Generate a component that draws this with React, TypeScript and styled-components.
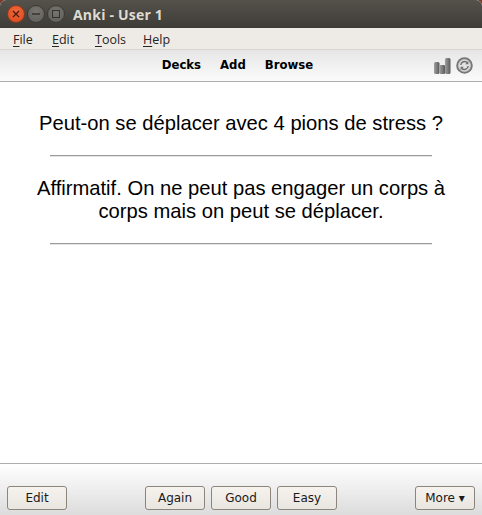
import React from "react";
import styled, { createGlobalStyle } from "styled-components";

const GlobalStyle = createGlobalStyle`
  html, body {
    margin: 0;
    padding: 0;
    background: #7a3a2c;
  }
`;

const Window = styled.div`
  width: 482px;
  height: 515px;
  display: flex;
  flex-direction: column;
  background: #fff;
  border-radius: 6px 6px 0 0;
  overflow: hidden;
  font-family: "Open Sans", "DejaVu Sans", sans-serif;
`;

const TitleBar = styled.div`
  height: 28px;
  flex: none;
  display: flex;
  align-items: center;
  padding-left: 8px;
  background: linear-gradient(#55524c, #3e3c37);
  box-sizing: border-box;
`;

const WindowButtons = styled.div`
  display: flex;
  gap: 4px;
  margin-right: 9px;
`;

const WindowButton = styled.div<{ $close?: boolean }>`
  width: 16px;
  height: 16px;
  border-radius: 50%;
  display: flex;
  align-items: center;
  justify-content: center;
  background: ${(p) =>
    p.$close
      ? "radial-gradient(circle at 50% 35%, #f0693c, #d9471d)"
      : "radial-gradient(circle at 50% 35%, #77756f, #5e5c56)"};
  border: 1px solid ${(p) => (p.$close ? "#8a3a20" : "#3c3a36")};
  margin: -1px -1px;
`;

const Title = styled.div`
  color: #dfdbd2;
  font-family: "Open Sans", sans-serif;
  font-weight: 700;
  font-size: 14px;
  letter-spacing: 0.2px;
`;

const MenuBar = styled.div`
  height: 19px;
  flex: none;
  display: flex;
  align-items: center;
  padding: 2px 0 0 13px;
  background: #eeebe6;
  border-bottom: 1px solid #d8d4ce;
  box-sizing: content-box;
`;

const MenuItem = styled.span<{ $width: number }>`
  width: ${(p) => p.$width}px;
  font-family: "Open Sans", sans-serif;
  font-size: 12.5px;
  color: #26251f;

  u {
    text-underline-offset: 2px;
  }
`;

const ToolBar = styled.div`
  height: 32px;
  flex: none;
  display: flex;
  align-items: center;
  justify-content: center;
  position: relative;
  padding: 0 7px 1px 0;
  box-sizing: border-box;
  background: linear-gradient(#e6e6e6, #fbfbfb);
  border-bottom: 1px solid #aeaeae;
`;

const ToolLinks = styled.div`
  display: flex;
  gap: 19px;
`;

const ToolLink = styled.span`
  font-family: "DejaVu Sans", sans-serif;
  font-weight: 700;
  font-size: 11.7px;
  color: #000;
`;

const ToolIcons = styled.div`
  position: absolute;
  right: 9px;
  top: 7px;
  display: flex;
  align-items: center;
  gap: 5px;
`;

const Card = styled.div`
  flex: 1;
  display: flex;
  flex-direction: column;
  align-items: center;
  padding: 30px 20px 0;
  font-family: "Liberation Sans", Arial, sans-serif;
  font-size: 20.2px;
  line-height: 23px;
  color: #000;
  text-align: center;
`;

const CardText = styled.div``;

const Rule = styled.hr`
  width: 382px;
  border: 0;
  border-top: 1px solid #9a9a9a;
  border-bottom: 1px solid #e4e4e4;
  margin: 20px 0;
  box-sizing: border-box;
  height: 2px;
`;

const BottomBar = styled.div`
  height: 52px;
  flex: none;
  box-sizing: border-box;
  border-top: 1px solid #aeaeae;
  background: linear-gradient(#ffffff, #dcdcdc);
  display: flex;
  align-items: flex-end;
  justify-content: space-between;
  padding: 0 7px 5px;
`;

const ButtonGroup = styled.div`
  display: flex;
  gap: 6px;
`;

const Button = styled.button`
  width: 60px;
  height: 24px;
  padding: 0;
  box-sizing: border-box;
  border: 1px solid #8c857c;
  border-radius: 3px;
  background: linear-gradient(#f6f3ef, #e9e5df);
  font-family: "DejaVu Sans", sans-serif;
  font-size: 12px;
  color: #1a1a1a;
`;

function StatsIcon() {
  return (
    <svg width="17" height="16" viewBox="0 0 17 16">
      <defs>
        <linearGradient id="barShade" x1="0" y1="0" x2="1" y2="0">
          <stop offset="0" stopColor="#a0a0a0" />
          <stop offset="1" stopColor="#5a5a5a" />
        </linearGradient>
      </defs>
      <rect x="0" y="4" width="5.5" height="12" rx="1.5" fill="url(#barShade)" />
      <rect x="5.5" y="7" width="5.5" height="9" rx="1" fill="url(#barShade)" />
      <rect x="11" y="0" width="5.5" height="16" rx="1.5" fill="url(#barShade)" />
    </svg>
  );
}

function SyncIcon() {
  return (
    <svg width="17" height="17" viewBox="0 0 17 17">
      <circle cx="8.5" cy="8.5" r="7.4" fill="#c4c4c4" stroke="#777" strokeWidth="1.8" />
      <circle cx="8.5" cy="8.5" r="5.4" fill="#e2e2e2" />
      <path d="M4.8 8a3.8 3.8 0 0 1 6.6-2.2" fill="none" stroke="#6e6e6e" strokeWidth="1.5" />
      <path d="M12.2 9a3.8 3.8 0 0 1-6.6 2.2" fill="none" stroke="#6e6e6e" strokeWidth="1.5" />
      <path d="M12.4 4v3.2H9.2z" fill="#6e6e6e" />
      <path d="M4.6 13V9.8h3.2z" fill="#6e6e6e" />
    </svg>
  );
}

export default function App() {
  return (
    <>
      <GlobalStyle />
      <Window>
        <TitleBar>
          <WindowButtons>
            <WindowButton $close>
              <svg width="8" height="8" viewBox="0 0 8 8">
                <path d="M1 1l6 6M7 1l-6 6" stroke="#4a1a0c" strokeWidth="1.3" />
              </svg>
            </WindowButton>
            <WindowButton>
              <svg width="8" height="8" viewBox="0 0 8 8">
                <path d="M0 4h8" stroke="#35332f" strokeWidth="1.5" />
              </svg>
            </WindowButton>
            <WindowButton>
              <svg width="8" height="8" viewBox="0 0 8 8">
                <rect x="0.5" y="0.5" width="7" height="7" fill="none" stroke="#35332f" />
              </svg>
            </WindowButton>
          </WindowButtons>
          <Title>Anki - User 1</Title>
        </TitleBar>
        <MenuBar>
          <MenuItem $width={39}><u>F</u>ile</MenuItem>
          <MenuItem $width={43}><u>E</u>dit</MenuItem>
          <MenuItem $width={48}><u>T</u>ools</MenuItem>
          <MenuItem $width={40}><u>H</u>elp</MenuItem>
        </MenuBar>
        <ToolBar>
          <ToolLinks>
            <ToolLink>Decks</ToolLink>
            <ToolLink>Add</ToolLink>
            <ToolLink>Browse</ToolLink>
          </ToolLinks>
          <ToolIcons>
            <StatsIcon />
            <SyncIcon />
          </ToolIcons>
        </ToolBar>
        <Card>
          <CardText>Peut-on se déplacer avec 4 pions de stress ?</CardText>
          <Rule />
          <CardText>
            Affirmatif. On ne peut pas engager un corps à
            <br />
            corps mais on peut se déplacer.
          </CardText>
          <Rule />
        </Card>
        <BottomBar>
          <Button>Edit</Button>
          <ButtonGroup>
            <Button>Again</Button>
            <Button>Good</Button>
            <Button>Easy</Button>
          </ButtonGroup>
          <Button>More ▾</Button>
        </BottomBar>
      </Window>
    </>
  );
}
